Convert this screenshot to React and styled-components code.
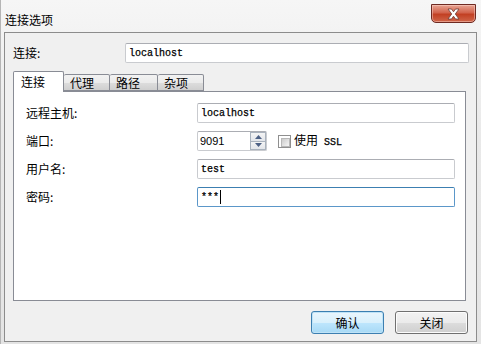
import styled, { createGlobalStyle } from "styled-components";

const GlobalStyle = createGlobalStyle`
  html, body {
    margin: 0;
    padding: 0;
    background: #ececec;
  }
  * {
    box-sizing: border-box;
  }
`;

const cjk = `"Noto Sans CJK SC", "Liberation Sans", sans-serif`;
const mono = `"Liberation Mono", "Noto Sans CJK SC", monospace`;

const Window = styled.div`
  width: 481px;
  height: 344px;
  display: flex;
  flex-direction: column;
  background: linear-gradient(180deg, #f6f6f6 0%, #e9e9e9 40%, #e4e4e4 100%);
  border-left: 1px solid #b5b5b5;
  font-family: ${cjk};
  font-size: 12px;
  color: #000;
`;

const TitleBar = styled.div`
  height: 32px;
  display: flex;
  justify-content: space-between;
  align-items: flex-start;
  padding: 0 5px 0 4px;
`;

const Title = styled.div`
  margin-top: 12px;
  font-size: 12px;
  line-height: 16px;
  color: #000;
`;

const CloseButton = styled.div`
  margin-top: 4px;
  width: 45px;
  height: 19px;
  border: 1px solid #6e2a22;
  border-radius: 0 0 5px 5px;
  background: linear-gradient(180deg, #e8a493 0%, #d2634c 45%, #c24023 55%, #d0664a 100%);
  box-shadow: inset 0 0 0 1px rgba(255, 220, 210, 0.45);
  display: flex;
  align-items: center;
  justify-content: center;
`;

const Client = styled.div`
  flex: 1;
  margin: 0 4px 2px 3px;
  border: 1px solid #8c8c8c;
  background: #f0f0f0;
  padding: 10px 7px 7px 7px;
  display: flex;
  flex-direction: column;
`;

const TopRow = styled.div`
  display: flex;
  align-items: center;
  height: 20px;
`;

const Label = styled.div`
  width: ${(p) => p.w}px;
  flex: none;
  line-height: 20px;
  padding-left: 1px;
`;

const TextBox = styled.div`
  width: ${(p) => p.w}px;
  height: 20px;
  border: 1px solid ${(p) => (p.focus ? "#5b97c9" : "#c9cbcf")};
  border-top-color: ${(p) => (p.focus ? "#3c7fb1" : "#abadb3")};
  border-radius: 2px;
  background: #fff;
  display: flex;
  align-items: center;
  padding-left: 3px;
  font-family: ${mono};
  font-size: 10px;
  color: #000;
  -webkit-text-stroke: 0.25px #000;
`;

const Caret = styled.span`
  display: inline-block;
  width: 1px;
  height: 14px;
  background: #000;
  margin-left: 1px;
`;

const Tabs = styled.div`
  margin: 8px 0 0 1px;
  width: 453px;
  flex: 1;
  display: flex;
  flex-direction: column;
`;

const TabStrip = styled.div`
  display: flex;
  align-items: flex-end;
  height: 20px;
  position: relative;
  z-index: 1;
`;

const Tab = styled.div`
  width: ${(p) => p.w}px;
  height: ${(p) => (p.active ? 21 : 17)}px;
  border: 1px solid #898c95;
  border-bottom: ${(p) => (p.active ? "none" : "1px solid #898c95")};
  border-left: ${(p) => (p.first || p.active ? "1px solid #898c95" : "none")};
  border-radius: 2px 2px 0 0;
  background: ${(p) =>
    p.active ? "#fff" : "linear-gradient(180deg, #f2f2f2 0%, #ebebeb 50%, #dddddd 51%, #cfcfcf 100%)"};
  padding: ${(p) => (p.active ? "2px 0 0 7px" : "0 0 0 6px")};
  line-height: 16px;
  font-size: 12px;
  margin-bottom: ${(p) => (p.active ? -1 : 0)}px;
`;

const Panel = styled.div`
  flex: 1;
  background: #fff;
  border: 1px solid #898c95;
  padding: 11px 0 0 11px;
`;

const Form = styled.div`
  display: grid;
  grid-template-columns: 172px 258px;
  grid-auto-rows: 20px;
  row-gap: 8px;
  align-items: center;
`;

const PortRow = styled.div`
  display: flex;
  align-items: center;
`;

const Spin = styled.div`
  width: 70px;
  height: 20px;
  display: flex;
  border: 1px solid #c9cbcf;
  border-top-color: #abadb3;
  border-radius: 2px;
  background: #fff;
`;

const SpinText = styled.div`
  flex: 1;
  padding-left: 2px;
  font-family: "Liberation Sans", sans-serif;
  font-size: 11px;
  line-height: 18px;
`;

const SpinButtons = styled.div`
  width: 16px;
  display: flex;
  flex-direction: column;
`;

const SpinButton = styled.div`
  flex: 1;
  border: 1px solid #a9b2bd;
  ${(p) => (p.up ? "border-bottom: none;" : "")}
  background: linear-gradient(180deg, #f4f4f4 0%, #e2e5ea 100%);
  display: flex;
  align-items: center;
  justify-content: center;
`;

const Checkbox = styled.div`
  width: 13px;
  height: 13px;
  margin-left: 11px;
  border: 1px solid #8f8f8f;
  background: #fff;
  padding: 2px;
  &::after {
    content: "";
    display: block;
    width: 100%;
    height: 100%;
    background: linear-gradient(135deg, #cbcbcb 0%, #f6f6f6 100%);
    border: 1px solid #b8b8b8;
  }
`;

const CheckText = styled.div`
  margin-left: 3px;
  font-size: 12px;
  line-height: 20px;
  & span {
    font-family: ${mono};
    font-size: 10px;
    margin-left: 6px;
    -webkit-text-stroke: 0.25px #000;
  }
`;

const Footer = styled.div`
  display: flex;
  justify-content: flex-end;
  gap: 11px;
  margin-top: 10px;
  padding-right: 1px;
`;

const Button = styled.div`
  width: 73px;
  height: 23px;
  border: 1px solid ${(p) => (p.primary ? "#3c7fb1" : "#707070")};
  border-radius: 3px;
  background: ${(p) =>
    p.primary
      ? "linear-gradient(180deg, #eaf6fd 0%, #d9f0fc 50%, #bee6fd 51%, #a7d9f5 100%)"
      : "linear-gradient(180deg, #f2f2f2 0%, #ebebeb 50%, #dddddd 51%, #cfcfcf 100%)"};
  box-shadow: inset 0 0 0 1px ${(p) => (p.primary ? "#bfe3f7" : "#fcfcfc")};
  display: flex;
  align-items: center;
  justify-content: center;
  font-size: 12px;
`;

const Arrow = ({ up }) => (
  <svg width="7" height="4" viewBox="0 0 7 4">
    <path d={up ? "M0 4 L3.5 0 L7 4 Z" : "M0 0 L3.5 4 L7 0 Z"} fill="#4d6185" />
  </svg>
);

export default function App() {
  return (
    <>
      <GlobalStyle />
      <Window>
        <TitleBar>
          <Title>连接选项</Title>
          <CloseButton>
            <svg width="15" height="12" viewBox="0 0 15 12">
              <path
                d="M2 1 L5.5 1 L7.5 3.8 L9.5 1 L13 1 L9.3 6 L13 11 L9.5 11 L7.5 8.2 L5.5 11 L2 11 L5.7 6 Z"
                fill="#fff"
                stroke="#6b3a33"
                strokeWidth="0.8"
              />
            </svg>
          </CloseButton>
        </TitleBar>
        <Client>
          <TopRow>
            <Label w={113}>连接:</Label>
            <TextBox w={344}>localhost</TextBox>
          </TopRow>
          <Tabs>
            <TabStrip>
              <Tab w={51} active first>
                连接
              </Tab>
              <Tab w={46}>代理</Tab>
              <Tab w={48}>路径</Tab>
              <Tab w={46}>杂项</Tab>
            </TabStrip>
            <Panel>
              <Form>
                <Label>远程主机:</Label>
                <TextBox w={258}>localhost</TextBox>
                <Label>端口:</Label>
                <PortRow>
                  <Spin>
                    <SpinText>9091</SpinText>
                    <SpinButtons>
                      <SpinButton up>
                        <Arrow up />
                      </SpinButton>
                      <SpinButton>
                        <Arrow />
                      </SpinButton>
                    </SpinButtons>
                  </Spin>
                  <Checkbox />
                  <CheckText>
                    使用<span>SSL</span>
                  </CheckText>
                </PortRow>
                <Label>用户名:</Label>
                <TextBox w={258}>test</TextBox>
                <Label>密码:</Label>
                <TextBox w={258} focus>
                  ***
                  <Caret />
                </TextBox>
              </Form>
            </Panel>
          </Tabs>
          <Footer>
            <Button primary>确认</Button>
            <Button>关闭</Button>
          </Footer>
        </Client>
      </Window>
    </>
  );
}
